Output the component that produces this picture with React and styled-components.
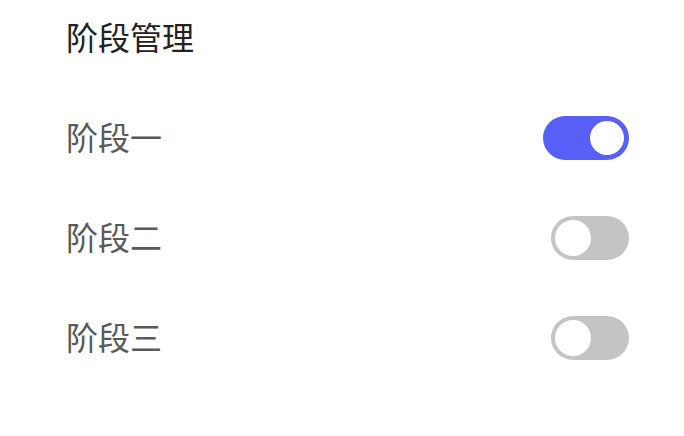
import React, { useState } from "react";
import styled, { createGlobalStyle } from "styled-components";

const GlobalStyle = createGlobalStyle`
  body {
    margin: 0;
    background: #ffffff;
    font-family: "Noto Sans CJK SC", "Noto Sans", sans-serif;
  }
`;

const Page = styled.div`
  width: 684px;
  height: 436px;
  padding: 0 55px 0 66px;
  box-sizing: border-box;
  display: flex;
  flex-direction: column;
`;

const Title = styled.div`
  height: 76px;
  line-height: 72px;
  font-size: 32px;
  color: #222222;
  margin-bottom: 12px;
`;

const Row = styled.div`
  height: 100px;
  display: flex;
  align-items: center;
  justify-content: space-between;
`;

const Label = styled.span`
  font-size: 32px;
  line-height: 40px;
  padding-bottom: 4px;
  color: #5a5a5a;
`;

const Track = styled.button`
  border: none;
  padding: 0;
  cursor: pointer;
  position: relative;
  height: 44px;
  width: ${(p) => (p.$on ? "86px" : "78px")};
  border-radius: 22px;
  background: ${(p) => (p.$on ? "#585ff6" : "#c4c4c4")};
`;

const Knob = styled.span`
  position: absolute;
  top: ${(p) => (p.$on ? "5px" : "4px")};
  left: ${(p) => (p.$on ? "47px" : "4px")};
  width: ${(p) => (p.$on ? "34px" : "36px")};
  height: ${(p) => (p.$on ? "34px" : "36px")};
  border-radius: 50%;
  background: #ffffff;
`;

function Switch({ on, onToggle }) {
  return (
    <Track $on={on} onClick={onToggle}>
      <Knob $on={on} />
    </Track>
  );
}

export default function App() {
  const [stages, setStages] = useState([
    { name: "阶段一", on: true },
    { name: "阶段二", on: false },
    { name: "阶段三", on: false },
  ]);

  const toggle = (i) => () => {
    setStages(stages.map((s, j) => (j === i ? { ...s, on: !s.on } : s)));
  };

  return (
    <>
      <GlobalStyle />
      <Page>
        <Title>阶段管理</Title>
        {stages.map((s, i) => (
          <Row key={s.name}>
            <Label>{s.name}</Label>
            <Switch on={s.on} onToggle={toggle(i)} />
          </Row>
        ))}
      </Page>
    </>
  );
}
